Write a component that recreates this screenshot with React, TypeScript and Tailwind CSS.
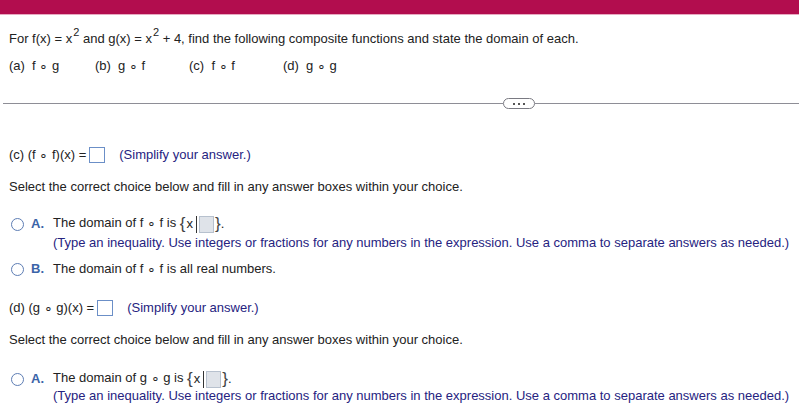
import React from "react";

function Ring() {
    return <span className="text-[14px] leading-[10px] relative top-[1px]">∘</span>
}

function AnswerBox() {
    return <span className="inline-block w-[16px] h-[16px] border border-[#6b8fc7] bg-white align-middle mx-[3px]"/>
}

function SetBox({a}: { a: string }) {
    return (
        <>
            The domain of {a} <Ring/> {a} is{" "}
            <span className="inline-flex items-center align-middle">
                <span className="text-[17px] leading-[16px] text-[#444]">{"{"}</span>
                <span className="ml-[1px]">x</span>
                <span className="ml-[3px] w-[1px] h-[17px] bg-[#333]"/>
                <span className="ml-[2px] w-[15px] h-[17px] bg-[#dfe3e9] border border-[#b7c1ce]"/>
                <span className="text-[17px] leading-[16px] text-[#444] ml-[1px]">{"}"}</span>
                <span>.</span>
            </span>
        </>
    )
}

function Choice({letter, children}: { letter: string, children: React.ReactNode }) {
    return (
        <div className="flex items-center h-[18px]">
            <span className="ml-[11px] w-[13px] h-[13px] rounded-full border-[1.5px] border-[#5d7db4] bg-white"/>
            <span className="ml-[7px] w-[22px] font-bold text-[#3b64a8]">{letter}</span>
            <span>{children}</span>
        </div>
    )
}

const hint = "text-[#26237f]"
const typeHint = "(Type an inequality. Use integers or fractions for any numbers in the expression. Use a comma to separate answers as needed.)"

export default function App() {
    return (
        <div className="w-[799px] h-[415px] overflow-hidden bg-white text-[#222] text-[13px] leading-[16px]"
             style={{fontFamily: '"Liberation Sans", Arial, sans-serif'}}>
            <div className="h-[14px] bg-[#b20d4e] border-b border-[#e7a9c0] box-content"/>

            <div className="pl-[9px] mt-[16px]">
                For f(x) = x<span className="text-[11px] relative top-[-7px] ml-[1px]">2</span> and g(x) = x<span
                className="text-[11px] relative top-[-7px] ml-[1px]">2</span> + 4, find the following composite functions and state the domain of each.
            </div>
            <div className="flex mt-[11px] pl-[9px]">
                <span className="w-[86px]">(a)&nbsp;&nbsp;f <Ring/> g</span>
                <span className="w-[94px]">(b)&nbsp;&nbsp;g <Ring/> f</span>
                <span className="w-[94px]">(c)&nbsp;&nbsp;f <Ring/> f</span>
                <span>(d)&nbsp;&nbsp;g <Ring/> g</span>
            </div>

            <div className="flex items-center mt-[24px] h-[11px] pl-[3px]">
                <div className="w-[500px] h-[1px] bg-[#8e8e96]"/>
                <div className="w-[32px] h-[11px] rounded-full border border-[#7a7a82] flex items-center justify-center gap-[3px]">
                    <span className="w-[2px] h-[2px] bg-[#555]"/>
                    <span className="w-[2px] h-[2px] bg-[#555]"/>
                    <span className="w-[2px] h-[2px] bg-[#555]"/>
                </div>
                <div className="flex-1 h-[1px] bg-[#8e8e96]"/>
            </div>

            <div className="pl-[9px] mt-[37px] flex items-center h-[18px]">
                <span>(c) (f <Ring/> f)(x) =</span><AnswerBox/><span className={`ml-[11px] ${hint}`}>(Simplify your answer.)</span>
            </div>
            <div className="pl-[9px] mt-[15px]">Select the correct choice below and fill in any answer boxes within your choice.</div>

            <div className="mt-[20px]">
                <Choice letter="A."><SetBox a="f"/></Choice>
                <div className={`pl-[53px] ${hint} mt-[2px]`}>{typeHint}</div>
            </div>
            <div className="mt-[9px]">
                <Choice letter="B.">The domain of f <Ring/> f is all real numbers.</Choice>
            </div>

            <div className="pl-[9px] mt-[21px] flex items-center h-[18px]">
                <span>(d) (g <Ring/> g)(x) =</span><AnswerBox/><span className={`ml-[11px] ${hint}`}>(Simplify your answer.)</span>
            </div>
            <div className="pl-[9px] mt-[15px]">Select the correct choice below and fill in any answer boxes within your choice.</div>

            <div className="mt-[22px]">
                <Choice letter="A."><SetBox a="g"/></Choice>
                <div className={`pl-[53px] ${hint} mt-[0px]`}>{typeHint}</div>
            </div>
        </div>
    )
}
